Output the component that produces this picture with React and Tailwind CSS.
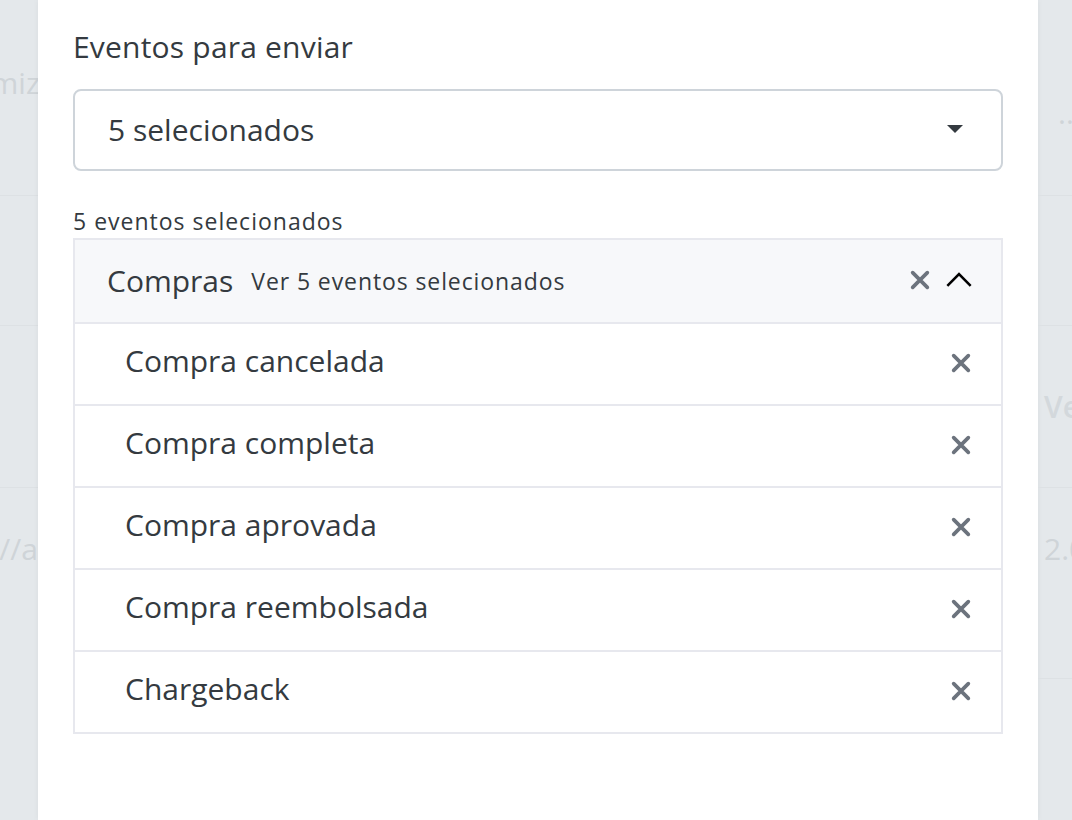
import { useState } from "react";

const events = [
  "Compra cancelada",
  "Compra completa",
  "Compra aprovada",
  "Compra reembolsada",
  "Chargeback",
];

function XIcon({ className }) {
  return (
    <svg viewBox="0 0 24 24" className={className} fill="none" stroke="currentColor" strokeWidth="4" strokeLinecap="round">
      <path d="M4 4 L20 20 M20 4 L4 20" />
    </svg>
  );
}

function App() {
  const [items, setItems] = useState(events);
  const [open, setOpen] = useState(true);

  return (
    <div className="w-[1072px] h-[820px] overflow-hidden flex bg-[#e4e8eb] font-['Open_Sans',sans-serif] text-[#343a40]">
      {/* backdrop left */}
      <div className="w-[38px] shrink-0 flex flex-col text-[#cfd4d8] text-[30px] overflow-hidden whitespace-nowrap">
        <div className="h-[196px] border-b border-[#dde1e4] flex items-center justify-end pb-[30px]">
          <span className="-mr-[2px]">miz</span>
        </div>
        <div className="h-[130px] border-b border-[#dde1e4]"></div>
        <div className="h-[162px] border-b border-[#dde1e4]"></div>
        <div className="h-[120px] flex items-center justify-end">
          <span>://a</span>
        </div>
      </div>

      {/* modal */}
      <div className="w-[1000px] shrink-0 bg-white px-[35px] pt-[27px] shadow-[0_0_6px_rgba(0,0,0,0.05)]">
        <label className="block text-[30px] leading-[40px] mb-[22px] tracking-[0.2px]">Eventos para enviar</label>

        <button className="w-full h-[82px] border-2 border-[#ced4da] rounded-[8px] flex items-center justify-between pl-[33px] pr-[38px] pb-[2px] text-[30px]">
          <span>5 selecionados</span>
          <span className="w-0 h-0 border-l-[8px] border-r-[8px] border-t-[8px] border-l-transparent border-r-transparent border-t-[#343a40]"></span>
        </button>

        <p className="mt-[35px] text-[23px] leading-[31px] tracking-[1px]">5 eventos selecionados</p>

        <div className="border-2 border-[#e7e8ee] mt-[1px]">
          <div className="h-[82px] bg-[#f7f8fa] flex items-center pl-[32px] pr-[28px] pb-[2px]">
            <span className="text-[30px]">Compras</span>
            <span className="ml-[18px] text-[23px] tracking-[0.9px] mt-[3px]">Ver {items.length} eventos selecionados</span>
            <button className="ml-auto text-[#6c737d]" onClick={() => setItems([])}>
              <XIcon className="w-[22px] h-[22px]" />
            </button>
            <button className="ml-[14px] text-black" onClick={() => setOpen(!open)}>
              <svg viewBox="0 0 24 24" className="w-[28px] h-[28px]" fill="none" stroke="currentColor" strokeWidth="2.2">
                <path d={open ? "M2 17 L12 7 L22 17" : "M2 7 L12 17 L22 7"} />
              </svg>
            </button>
          </div>
          {open &&
            items.map((ev) => (
              <div key={ev} className="h-[82px] border-t-2 border-[#e7e8ee] flex items-center pl-[50px] pr-[29px]">
                <span className="text-[30px] leading-[40px] -mt-[6px]">{ev}</span>
                <button className="ml-auto text-[#6c737d] -mt-[2px]" onClick={() => setItems(items.filter((i) => i !== ev))}>
                  <XIcon className="w-[22px] h-[22px]" />
                </button>
              </div>
            ))}
        </div>
      </div>

      {/* backdrop right */}
      <div className="w-[34px] shrink-0 flex flex-col text-[#cfd4d8] text-[30px] overflow-hidden whitespace-nowrap">
        <div className="h-[196px] border-b border-[#dde1e4] flex items-start pt-[98px] pl-[20px] gap-[12px]">
          <span className="leading-[30px]">..</span>
          <span className="w-[20px] h-[24px] border-2 border-[#cfd6e0] rounded-[4px] mt-[4px]"></span>
        </div>
        <div className="h-[130px] border-b border-[#dde1e4]"></div>
        <div className="h-[162px] border-b border-[#dde1e4] flex items-center pl-[6px]">
          <span className="font-semibold text-[#d3d8dc]">Ve</span>
        </div>
        <div className="h-[120px] flex items-center pl-[6px]">
          <span>2.0</span>
        </div>
        <div className="flex-1 border-t border-[#dde1e4] mt-[70px]"></div>
      </div>
    </div>
  );
}

export default App;
